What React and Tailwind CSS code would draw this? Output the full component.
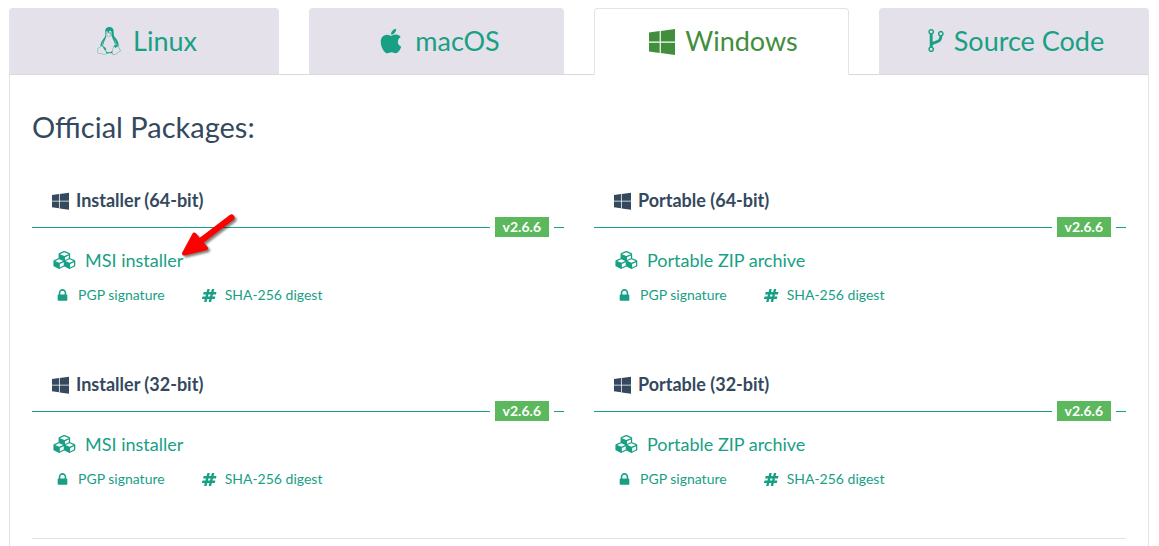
import { FaApple, FaLinux } from "react-icons/fa";

function Glyph({ viewBox, d, className }) {
  return (
    <svg viewBox={viewBox} fill="currentColor" aria-hidden="true" className={className}>
      <path d={d} />
    </svg>
  );
}

function WindowsIcon({ className }) {
  return (
    <Glyph
      viewBox="0 0 1664 1664"
      className={className}
      d="M682 942v651l-682-94v-557h682zm0-743v659h-682v-565zm982 743v786l-907-125v-661h907zm0-878v794h-907v-669z"
    />
  );
}

function ForkIcon({ className }) {
  return (
    <Glyph
      viewBox="0 0 1024 1792"
      className={className}
      d="M288 1472q0-40-28-68t-68-28-68 28-28 68 28 68 68 28 68-28 28-68zm0-1152q0-40-28-68t-68-28-68 28-28 68 28 68 68 28 68-28 28-68zm640 128q0-40-28-68t-68-28-68 28-28 68 28 68 68 28 68-28 28-68zm96 0q0 52-26 96.5t-70 69.5q-2 287-226 414-67 38-203 81-128 40-169.5 71t-41.5 100v26q44 25 70 69.5t26 96.5q0 80-56 136t-136 56-136-56-56-136q0-52 26-96.5t70-69.5v-820q-44-25-70-69.5t-26-96.5q0-80 56-136t136-56 136 56 56 136q0 52-26 96.5t-70 69.5v497q54-26 154-57 55-17 87.5-29.5t70.5-31 59-39.5 40.5-51 28-69.5 8.5-91.5q-44-25-70-69.5t-26-96.5q0-80 56-136t136-56 136 56 56 136z"
    />
  );
}

function CubesIcon({ className }) {
  return (
    <Glyph
      viewBox="0 0 2304 1792"
      className={className}
      d="M640 1632l384-192v-314l-384 164v342zm-64-454l404-173-404-173-404 173zm1088 454l384-192v-314l-384 164v342zm-64-454l404-173-404-173-404 173zm-448-293l384-165v-266l-384 164v267zm-64-379l441-189-441-189-441 189zm1088 518v416q0 36-19 67t-52 47l-448 224q-25 14-57 14t-57-14l-448-224q-4-2-7-4-2 2-7 4l-448 224q-25 14-57 14t-57-14l-448-224q-33-16-52-47t-19-67v-416q0-38 21.5-70t56.5-48l434-186v-400q0-38 21.5-70t56.5-48l448-192q23-10 50-10t50 10l448 192q35 16 56.5 48t21.5 70v400l434 186q36 16 57 48t21 70z"
    />
  );
}

function LockIcon({ className }) {
  return (
    <Glyph
      viewBox="0 0 1152 1792"
      className={className}
      d="M320 768h512v-192q0-106-75-181t-181-75-181 75-75 181v192zm832 96v576q0 40-28 68t-68 28h-960q-40 0-68-28t-28-68v-576q0-40 28-68t68-28h32v-192q0-184 132-316t316-132 316 132 132 316v192h32q40 0 68 28t28 68z"
    />
  );
}

function HashIcon({ className }) {
  return (
    <Glyph
      viewBox="0 0 1792 1792"
      className={className}
      d="M959 1024l64-256h-254l-64 256h254zm768-504l-56 224q-7 24-31 24h-327l-64 256h311q15 0 25 12 10 14 6 28l-56 224q-5 24-31 24h-327l-81 328q-7 24-32 24h-224q-16 0-26-12-9-12-6-28l78-312h-254l-81 328q-7 24-32 24h-225q-15 0-25-12-9-12-6-28l78-312h-311q-15 0-25-12-9-12-6-28l56-224q7-24 31-24h327l64-256h-311q-15 0-25-12-10-14-6-28l56-224q5-24 31-24h327l81-328q7-24 32-24h224q15 0 25 12 9 12 6 28l-78 312h254l81-328q7-24 32-24h224q15 0 25 12 9 12 6 28l-78 312h311q15 0 25 12 9 12 6 28z"
    />
  );
}

function Arrow() {
  return (
    <svg
      viewBox="0 0 60 46"
      aria-hidden="true"
      className="pointer-events-none absolute top-[26px] left-[148px] h-[46px] w-[60px] drop-shadow-[2px_2px_1px_rgba(0,0,0,0.5)]"
      stroke="#fb0200"
      strokeLinejoin="round"
      strokeLinecap="round"
    >
      <path d="M51.5 4.5L18 30" fill="none" strokeWidth="6" />
      <path d="M4 40.5L14.3 21.5L26 35.3Z" fill="#fb0200" strokeWidth="4" />
    </svg>
  );
}

const tabs = [
  { label: "Linux", Icon: FaLinux, icon: "size-7", cell: "pr-[15px]" },
  { label: "macOS", Icon: FaApple, icon: "size-7", cell: "px-[15px]" },
  { label: "Windows", Icon: WindowsIcon, icon: "size-[26px] overflow-visible", cell: "px-[15px]", active: true },
  { label: "Source Code", Icon: ForkIcon, icon: "h-[27px] w-4", cell: "pl-[15px]" },
];

const packages = [
  { title: "Installer (64-bit)", file: "MSI installer", marked: true },
  { title: "Portable (64-bit)", file: "Portable ZIP archive" },
  { title: "Installer (32-bit)", file: "MSI installer" },
  { title: "Portable (32-bit)", file: "Portable ZIP archive" },
];

function Tab({ label, Icon, icon, cell, active }) {
  return (
    <li className={`-mb-px w-1/4 ${cell}`}>
      <a
        href="#packages"
        aria-current={active ? "page" : undefined}
        className={`flex h-[67px] items-center justify-center gap-2.5 rounded-t border pb-0.5 pl-1 text-[27px] leading-10 ${
          active
            ? "border-[#e4e1eb] border-b-white bg-white text-[#418e3d]"
            : "border-[#e4e1eb] border-b-[#d8d8dc] bg-[#e4e1eb] text-[#18a085]"
        }`}
      >
        <Icon className={icon} />
        {label}
      </a>
    </li>
  );
}

function Package({ title, file, marked }) {
  return (
    <section className="relative text-[#18a085]">
      <h3 className="mb-1 flex h-[26px] items-center gap-[7px] pl-5 text-lg font-bold text-[#34495e]">
        <WindowsIcon className="size-[17px] overflow-visible" />
        {title}
      </h3>
      <div className="flex items-center gap-[5px]">
        <span className="h-px flex-1 bg-[#18a085]" />
        <span className="bg-[#5cb85c] px-2 text-sm leading-5 font-bold text-white">v2.6.6</span>
        <span className="h-px w-2.5 bg-[#18a085]" />
      </div>
      <a href="#download" className="mt-[11px] ml-[21px] flex h-6 w-fit items-center gap-2 text-lg">
        <CubesIcon className="h-[18px] w-6" />
        {file}
      </a>
      <div className="mt-[13px] flex h-5 gap-[37px] pl-[23px] text-sm">
        <a href="#signature" className="flex items-center gap-2">
          <LockIcon className="size-[15px]" />
          PGP signature
        </a>
        <a href="#digest" className="flex items-center gap-2">
          <HashIcon className="size-[15px]" />
          SHA-256 digest
        </a>
      </div>
      {marked && <Arrow />}
    </section>
  );
}

export default function App() {
  return (
    <div className="flex min-h-screen flex-col bg-white pt-2 pr-2.5 pl-[9px] font-['Lato',sans-serif]">
      <nav>
        <ul className="flex border-b border-[#d8d8dc]">
          {tabs.map((tab) => (
            <Tab key={tab.label} {...tab} />
          ))}
        </ul>
      </nav>
      <main id="packages" className="flex-1 border-x border-[#e4e1eb] px-[22px] pt-8">
        <h2 className="text-[29px] leading-10 text-[#34495e]">Official Packages:</h2>
        <div className="mt-10 grid grid-cols-2 gap-x-[30px] gap-y-[66px]">
          {packages.map((item) => (
            <Package key={item.title} {...item} />
          ))}
        </div>
        <hr className="mt-[49px] border-[#e4e1eb]" />
      </main>
    </div>
  );
}
